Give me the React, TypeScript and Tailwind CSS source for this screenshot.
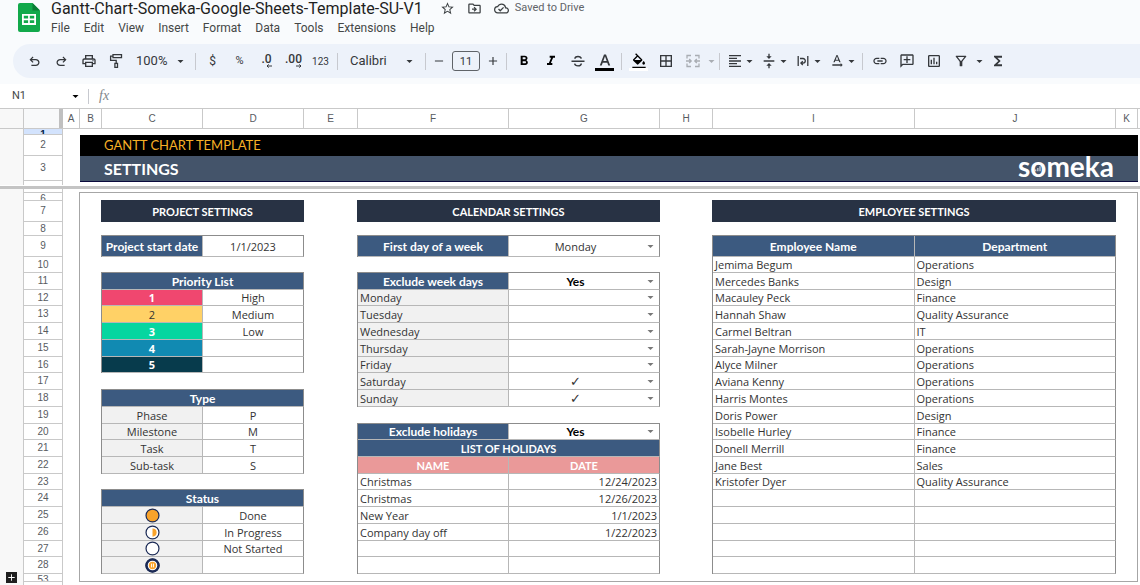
import type { ReactNode } from 'react'
import clsx from 'clsx'
import {
  MdAdd,
  MdBorderAll,
  MdFormatAlignLeft,
  MdFormatBold,
  MdFormatColorFill,
  MdFormatColorText,
  MdFormatItalic,
  MdFunctions,
  MdLink,
  MdOutlineAddComment,
  MdOutlineCloudDone,
  MdOutlineDriveFileMove,
  MdOutlineFilterAlt,
  MdOutlineInsertChart,
  MdOutlinePrint,
  MdRemove,
  MdStarBorder,
  MdStrikethroughS,
  MdTextRotationNone,
  MdVerticalAlignCenter,
} from 'react-icons/md'

const menus = ['File', 'Edit', 'View', 'Insert', 'Format', 'Data', 'Tools', 'Extensions', 'Help']

const columns = ['A', 'B', 'C', 'D', 'E', 'F', 'G', 'H', 'I', 'J', 'K', '']

// A..K plus the sliver of L; the wide columns share the free width
const sheetGrid =
  'grid grid-cols-[17px_22px_101fr_101fr_54fr_151fr_151fr_53fr_202fr_201fr_22px_2px]'

const priorities = [
  { rank: '1', label: 'High', tone: 'bg-[#f0476f] text-white font-bold' },
  { rank: '2', label: 'Medium', tone: 'bg-[#ffd166] text-[#333333]' },
  { rank: '3', label: 'Low', tone: 'bg-[#06d6a0] text-white font-bold' },
  { rank: '4', label: '', tone: 'bg-[#118ab2] text-white font-bold' },
  { rank: '5', label: '', tone: 'bg-[#073b4c] text-white font-bold' },
]

const types = [
  ['Phase', 'P'],
  ['Milestone', 'M'],
  ['Task', 'T'],
  ['Sub-task', 'S'],
]

const statuses = ['Done', 'In Progress', 'Not Started', '']

const weekDays = [
  { day: 'Monday', off: '' },
  { day: 'Tuesday', off: '' },
  { day: 'Wednesday', off: '' },
  { day: 'Thursday', off: '' },
  { day: 'Friday', off: '' },
  { day: 'Saturday', off: '✓' },
  { day: 'Sunday', off: '✓' },
]

const holidays = [
  ['Christmas', '12/24/2023'],
  ['Christmas', '12/26/2023'],
  ['New Year', '1/1/2023'],
  ['Company day off', '1/22/2023'],
  ['', ''],
  ['', ''],
]

const employees = [
  ['Jemima Begum', 'Operations'],
  ['Mercedes Banks', 'Design'],
  ['Macauley Peck', 'Finance'],
  ['Hannah Shaw', 'Quality Assurance'],
  ['Carmel Beltran', 'IT'],
  ['Sarah-Jayne Morrison', 'Operations'],
  ['Alyce Milner', 'Operations'],
  ['Aviana Kenny', 'Operations'],
  ['Harris Montes', 'Operations'],
  ['Doris Power', 'Design'],
  ['Isobelle Hurley', 'Finance'],
  ['Donell Merrill', 'Finance'],
  ['Jane Best', 'Sales'],
  ['Kristofer Dyer', 'Quality Assurance'],
  ['', ''],
  ['', ''],
  ['', ''],
  ['', ''],
  ['', ''],
]

const scrollRows = [5, 6, 7, 8, 9, 10, 11, 12, 13, 14, 15, 16, 17, 18, 19, 20, 21, 22, 23, 24, 25, 26, 27, 28, 53]

const shortRows = [10, 12, 16, 20, 23, 27]

function rowHeight(row: number) {
  if (row === 5) return 'h-1'
  if (row === 6 || row === 53) return 'h-2'
  if (row === 8) return 'h-[14px]'
  if (row === 7 || row === 9) return 'h-[21px]'
  return shortRows.includes(row) ? 'h-4' : 'h-[17px]'
}

/* ---------- toolbar ---------- */

function Caret({ className }: { className?: string }) {
  return (
    <svg viewBox="0 0 8 4" className={clsx('h-[3px] w-[7px] shrink-0', className)} aria-hidden>
      <path d="M0 0h8L4 4z" fill="currentColor" />
    </svg>
  )
}

function ToolButton({ label, muted, children }: { label: string; muted?: boolean; children: ReactNode }) {
  return (
    <button
      type="button"
      aria-label={label}
      className={clsx('flex h-6 w-[27px] shrink-0 items-center justify-center', muted && 'text-[#a9adb3]')}
    >
      {children}
    </button>
  )
}

function MenuButton({ label, children }: { label: string; children: ReactNode }) {
  return (
    <button type="button" aria-label={label} className="flex h-6 w-[34px] shrink-0 items-center justify-center gap-[3px]">
      {children}
      <Caret />
    </button>
  )
}

function CaretButton({ label, muted }: { label: string; muted?: boolean }) {
  return (
    <button
      type="button"
      aria-label={label}
      className={clsx('flex h-6 w-[10px] shrink-0 items-center justify-center', muted && 'text-[#a9adb3]')}
    >
      <Caret />
    </button>
  )
}

function Divider() {
  return <span className="mx-[3px] h-[17px] w-px shrink-0 bg-[#c7c9cf]" />
}

const undoPath =
  'M280-200v-80h284q63 0 109.5-40T720-420q0-60-46.5-100T564-560H312l104 104-56 56-200-200 200-200 56 56-104 104h252q97 0 166.5 63T800-420q0 94-69.5 157T564-200H280Z'

function UndoIcon({ className }: { className?: string }) {
  return (
    <svg viewBox="0 -960 960 960" className={clsx('size-[15px]', className)} fill="currentColor" aria-hidden>
      <path d={undoPath} />
    </svg>
  )
}

function PaintRollerIcon() {
  return (
    <svg viewBox="0 0 16 16" className="size-4" fill="none" stroke="currentColor" strokeWidth="1.3" aria-hidden>
      <path d="M5 1.7h8.5v3H5zM5 3.2H2.6v4.1h5.6v3M6.9 10.3h2.6v4H6.9z" />
    </svg>
  )
}

function DecimalIcon({ digits, increase }: { digits: string; increase?: boolean }) {
  return (
    <span className="flex flex-col items-end leading-none">
      <span className="text-[12px] leading-[10px] font-medium">{digits}</span>
      <svg viewBox="0 0 6 4" className={clsx('h-1 w-[6px]', increase && '-scale-x-100')} aria-hidden>
        <path d="M6 2H1M2.7.4 1 2l1.7 1.6" fill="none" stroke="currentColor" />
      </svg>
    </span>
  )
}

function StrikeIcon() {
  return (
    <svg viewBox="0 0 16 16" className="size-4" fill="none" stroke="currentColor" strokeWidth="1.4" aria-hidden>
      <path d="M1.5 8.2h13M11.3 5.6C11 4.2 9.800 3.500 8 3.500S4.900 4.200 4.900 5.800M4.600 10.700c.3 1.400 1.500 2.200 3.400 2.200s3.300-.8 3.300-2.400" />
    </svg>
  )
}

function MergeIcon() {
  return (
    <svg viewBox="0 0 16 14" className="h-[14px] w-4" fill="none" stroke="currentColor" strokeWidth="1.3" aria-hidden>
      <path d="M6 1.5H2v3M10 1.5h4v3M6 12.5H2v-3M10 12.5h4v-3M1 7h5M4.2 5 6.2 7l-2 2M15 7h-5M11.8 5l-2 2 2 2" />
    </svg>
  )
}

function WrapIcon() {
  return (
    <svg viewBox="0 0 16 16" className="size-4 shrink-0" fill="none" stroke="currentColor" strokeWidth="1.3" aria-hidden>
      <path d="M3.200 3v10M12.800 3v10M5 5.500h3a2.300 2.300 0 0 1 0 4.600H6M7.800 8.200 5.900 10.100l1.900 1.900" />
    </svg>
  )
}

function Toolbar() {
  return (
    <div
      role="toolbar"
      aria-label="Main"
      className="ml-[13px] flex h-[34px] items-center overflow-hidden rounded-l-full bg-[#edf2fa] pl-2 text-[#35383c]"
    >
      <ToolButton label="Undo"><UndoIcon /></ToolButton>
      <ToolButton label="Redo"><UndoIcon className="-scale-x-100" /></ToolButton>
      <ToolButton label="Print"><MdOutlinePrint size={16} /></ToolButton>
      <ToolButton label="Paint format"><PaintRollerIcon /></ToolButton>
      <button type="button" className="flex h-6 w-[63px] shrink-0 items-center justify-between pr-2 pl-[7px] text-[13px]">
        100%
        <Caret />
      </button>
      <Divider />
      <ToolButton label="Format as currency"><span className="text-[12px]">$</span></ToolButton>
      <ToolButton label="Format as percent"><span className="text-[11px]">%</span></ToolButton>
      <ToolButton label="Decrease decimal places"><DecimalIcon digits=".0" /></ToolButton>
      <ToolButton label="Increase decimal places"><DecimalIcon digits=".00" increase /></ToolButton>
      <ToolButton label="More formats"><span className="text-[10px]">123</span></ToolButton>
      <Divider />
      <button type="button" className="flex h-6 w-[81px] shrink-0 items-center justify-between px-[9px] text-[13px]">
        Calibri
        <Caret />
      </button>
      <Divider />
      <div className="flex shrink-0 items-center gap-[3px]">
        <button type="button" aria-label="Decrease font size" className="flex w-5 justify-center">
          <MdRemove size={14} />
        </button>
        <input
          aria-label="Font size"
          defaultValue="11"
          className="h-5 w-7 rounded-[3px] border border-[#5f6368] text-center text-[11px]"
        />
        <button type="button" aria-label="Increase font size" className="flex w-5 justify-center">
          <MdAdd size={14} />
        </button>
      </div>
      <Divider />
      <ToolButton label="Bold"><MdFormatBold size={16} className="text-black" /></ToolButton>
      <ToolButton label="Italic"><MdFormatItalic size={16} className="text-black" /></ToolButton>
      <ToolButton label="Strikethrough"><StrikeIcon /></ToolButton>
      <ToolButton label="Text color">
        <span className="flex flex-col items-center">
          <MdFormatColorText size={16} viewBox="2 0 20 20" />
          <span className="h-[3px] w-[19px] bg-black" />
        </span>
      </ToolButton>
      <Divider />
      <ToolButton label="Fill color">
        <span className="flex flex-col items-center">
          <MdFormatColorFill size={16} className="text-black" viewBox="0 0 24 20" />
          <span className="h-[3px] w-[19px] bg-white" />
        </span>
      </ToolButton>
      <ToolButton label="Borders"><MdBorderAll size={16} /></ToolButton>
      <ToolButton label="Merge cells" muted><MergeIcon /></ToolButton>
      <CaretButton label="Merge type" muted />
      <Divider />
      <MenuButton label="Horizontal align"><MdFormatAlignLeft size={16} /></MenuButton>
      <MenuButton label="Vertical align"><MdVerticalAlignCenter size={16} /></MenuButton>
      <MenuButton label="Text wrapping"><WrapIcon /></MenuButton>
      <MenuButton label="Text rotation"><MdTextRotationNone size={16} /></MenuButton>
      <Divider />
      <ToolButton label="Insert link"><MdLink size={16} /></ToolButton>
      <ToolButton label="Insert comment"><MdOutlineAddComment size={16} className="-scale-x-100" /></ToolButton>
      <ToolButton label="Insert chart"><MdOutlineInsertChart size={16} /></ToolButton>
      <ToolButton label="Create a filter"><MdOutlineFilterAlt size={16} /></ToolButton>
      <CaretButton label="Filter views" />
      <ToolButton label="Functions"><MdFunctions size={16} /></ToolButton>
    </div>
  )
}

/* ---------- document header ---------- */

function SheetsLogo() {
  return (
    <svg viewBox="0 0 22 29" className="mt-[3px] h-[29px] w-[22px] shrink-0" aria-hidden>
      <path d="M2 0h12.5L22 7.5V27a2 2 0 0 1-2 2H2a2 2 0 0 1-2-2V2a2 2 0 0 1 2-2z" fill="#12a94b" />
      <path d="M14.5 0 22 7.5h-7.5z" fill="#0b7d36" />
      <path d="M4 11h14v11H4zm1.8 1.8v2.8h4.3v-2.8zm6 0v2.8h4.4v-2.8zm-6 4.5v2.8h4.3v-2.8zm6 0v2.8h4.4v-2.8z" fill="#fff" fillRule="evenodd" />
    </svg>
  )
}

function DocHeader() {
  return (
    <header className="flex pb-[6px] pl-[18px]">
      <SheetsLogo />
      <div className="ml-[11px] flex min-w-0 flex-col whitespace-nowrap">
        <div className="flex h-[18px] items-center pb-px text-[#3c4043]">
          <h1 className="mr-[17px] text-[16px] leading-4 text-[#1f1f1f]">
            Gantt-Chart-Someka-Google-Sheets-Template-SU-V1
          </h1>
          <button type="button" aria-label="Star" className="mr-3"><MdStarBorder size={15} /></button>
          <button type="button" aria-label="Move" className="mr-3"><MdOutlineDriveFileMove size={15} /></button>
          <MdOutlineCloudDone size={15} aria-hidden />
          <span className="ml-[6px] text-[11px] text-[#5f6368]">Saved to Drive</span>
        </div>
        <nav className="flex h-5 items-center gap-[14px] text-[12px] text-[#444746]">
          {menus.map((menu) => (
            <button key={menu} type="button">{menu}</button>
          ))}
        </nav>
      </div>
    </header>
  )
}

function FormulaBar() {
  return (
    <div className="mt-[6px] flex h-6 items-center bg-white text-[#444746]">
      <button type="button" className="flex w-[88px] items-center justify-between pr-[9px] pl-3 text-[11px]">
        N1
        <Caret className="text-black" />
      </button>
      <span className="h-[15px] w-px bg-[#c7c9cf]" />
      <span className="ml-[10px] font-['Liberation_Serif',serif] text-[14px] leading-4 text-[#80868b] italic">fx</span>
      <input aria-label="Formula" className="h-5 min-w-0 flex-1 bg-transparent px-2 outline-none" />
    </div>
  )
}

/* ---------- sheet ---------- */

function Gutter({ children }: { children?: ReactNode }) {
  return (
    <div className="flex w-6 shrink-0 flex-col items-center border-r border-[#c9c9c9] bg-[#f8f8f8]">{children}</div>
  )
}

function RowNumber({ height, active, top, children }: { height: string; active?: boolean; top?: boolean; children?: ReactNode }) {
  return (
    <div
      className={clsx(
        'flex justify-center overflow-hidden border-b border-[#c9c9c9]',
        height,
        top ? 'items-start' : 'items-center',
        active ? 'bg-[#d3e3fd] font-bold text-[#041e49]' : 'text-[#575b5f]',
      )}
    >
      {children}
    </div>
  )
}

function ColumnHeader() {
  return (
    <div className="flex h-[21px] border-y border-[#c9c9c9] text-[10px] text-[#575b5f]">
      <div className="w-6 shrink-0 border-r border-[#c9c9c9] bg-[#f8f8f8]" />
      <div className="w-[39px] shrink-0 border-r-4 border-[#c0c0c0] bg-[#f8f9fa]" />
      <div className={clsx(sheetGrid, 'flex-1')}>
        {columns.map((column, i) => (
          <span key={i} className="flex items-center justify-center border-r border-[#c9c9c9] last:border-r-0">
            {column}
          </span>
        ))}
      </div>
    </div>
  )
}

function SomekaLogo() {
  return (
    <span className="relative self-start text-[28px] leading-5 font-bold text-white" aria-label="someka">
      someka
      <svg viewBox="0 0 8 8" className="absolute top-[9px] left-[17px] size-[7px]" aria-hidden>
        <path d="M0 7V5h1.5v2zM2.500 7V3.500H4V7zM5 7V1.500h1.500V7z" fill="#c9d0da" />
      </svg>
    </span>
  )
}

function FrozenRows() {
  return (
    <div className="flex h-14">
      <Gutter />
      <div className="w-[39px] shrink-0 border-r border-[#c9c9c9] text-[10px] leading-3">
        <RowNumber height="h-[6px]" active top>1</RowNumber>
        <RowNumber height="h-[21px]">2</RowNumber>
        <RowNumber height="h-[25px]">3</RowNumber>
      </div>
      <div className={clsx(sheetGrid, 'flex-1 pt-[6px] pb-[3px]')}>
        <div className="col-start-2 col-end-12 flex flex-col border-b border-[#0a0a3c] font-['Lato',sans-serif]">
          <div className="flex h-[21px] items-center bg-black pl-6 text-[13px] text-[#f6b026]">GANTT CHART TEMPLATE</div>
          <div className="flex h-[25px] items-center justify-between bg-[#44546a] pr-6 pl-6">
            <h2 className="text-[16px] font-bold text-white">SETTINGS</h2>
            <SomekaLogo />
          </div>
        </div>
      </div>
    </div>
  )
}

type CellProps = { as?: 'td' | 'th'; className?: string; span?: number; children?: ReactNode }

function Cell({ as: Tag = 'td', className, span, children }: CellProps) {
  return (
    <Tag
      colSpan={span}
      className={clsx('overflow-hidden border-r border-b border-[#b7b7b7] p-0 whitespace-nowrap last:border-r-[#8c8c8c]', className)}
    >
      {children}
    </Tag>
  )
}

const headCell = "bg-[#3c5a80] font-['Lato',sans-serif] text-[12px] font-bold text-white"
const holidayHeadCell = "bg-[#ea9999] font-['Lato',sans-serif] font-bold text-white"

function Block({ label, children }: { label: string; children: ReactNode }) {
  return (
    <table
      aria-label={label}
      className="-mt-px w-full table-fixed border-separate border-spacing-0 border-t border-l border-[#8c8c8c] text-center"
    >
      <tbody>{children}</tbody>
    </table>
  )
}

function Row({ n, children }: { n: number; children: ReactNode }) {
  return <tr className={rowHeight(n)}>{children}</tr>
}

function Gap({ row }: { row: number }) {
  return <div className={clsx('shrink-0', rowHeight(row))} />
}

function PanelTitle({ children }: { children: ReactNode }) {
  return (
    <h3 className="-mt-px flex h-[22px] shrink-0 items-center justify-center bg-[#283244] font-['Lato',sans-serif] font-bold text-white">
      {children}
    </h3>
  )
}

function CellSelect({ label, value, options, bold }: { label: string; value: string; options: string[]; bold?: boolean }) {
  return (
    <span className="grid items-center">
      <select
        aria-label={label}
        defaultValue={value}
        className={clsx(
          'col-start-1 row-start-1 h-[15px] w-full appearance-none bg-transparent pr-[17px] text-center leading-[15px]',
          bold && "font-['Lato',sans-serif] text-[12px] font-bold text-black",
          value === '✓' && 'text-[13px]',
        )}
      >
        {options.map((option) => (
          <option key={option}>{option}</option>
        ))}
      </select>
      <Caret className="pointer-events-none col-start-1 row-start-1 mr-[5px] justify-self-end text-[#777777]" />
    </span>
  )
}

function StatusIcon({ index }: { index: number }) {
  return (
    <svg viewBox="0 0 16 16" className="mx-auto size-[15px]" aria-hidden>
      <circle cx="8" cy="8" r="6.9" fill={index === 0 ? '#f9a32b' : '#fff'} stroke="#1b2a55" strokeWidth="1.3" />
      {index === 1 && <path d="M8 3.6a4.4 4.4 0 0 1 0 8.8z" fill="#f9a32b" />}
      {index === 3 && (
        <>
          <circle cx="8" cy="8" r="6.4" fill="#fff" stroke="#1b2a55" strokeWidth="2.6" />
          <circle cx="8" cy="8" r="3.9" fill="#f9a32b" />
          <path d="M7 6v4M9 6v4" stroke="#fff" strokeWidth="1" />
        </>
      )}
    </svg>
  )
}

function ProjectPanel() {
  return (
    <section className="col-start-2 col-end-4 -ml-px flex flex-col">
      <PanelTitle>PROJECT SETTINGS</PanelTitle>
      <Gap row={8} />
      <Block label="Project start date">
        <Row n={9}>
          <Cell as="th" className={headCell}>Project start date</Cell>
          <Cell>1/1/2023</Cell>
        </Row>
      </Block>
      <Gap row={10} />
      <Block label="Priority list">
        <Row n={11}>
          <Cell as="th" span={2} className={headCell}>Priority List</Cell>
        </Row>
        {priorities.map((item, i) => (
          <Row key={item.rank} n={12 + i}>
            <Cell className={item.tone}>{item.rank}</Cell>
            <Cell>{item.label}</Cell>
          </Row>
        ))}
      </Block>
      <Gap row={17} />
      <Block label="Type">
        <Row n={18}>
          <Cell as="th" span={2} className={headCell}>Type</Cell>
        </Row>
        {types.map(([name, code], i) => (
          <Row key={name} n={19 + i}>
            <Cell className="bg-[#f1f1f1]">{name}</Cell>
            <Cell>{code}</Cell>
          </Row>
        ))}
      </Block>
      <Gap row={23} />
      <Block label="Status">
        <Row n={24}>
          <Cell as="th" span={2} className={headCell}>Status</Cell>
        </Row>
        {statuses.map((status, i) => (
          <Row key={i} n={25 + i}>
            <Cell className="bg-[#f1f1f1]"><StatusIcon index={i} /></Cell>
            <Cell>{status}</Cell>
          </Row>
        ))}
      </Block>
    </section>
  )
}

function CalendarPanel() {
  return (
    <section className="col-start-5 col-end-7 -ml-px flex flex-col">
      <PanelTitle>CALENDAR SETTINGS</PanelTitle>
      <Gap row={8} />
      <Block label="First day of a week">
        <Row n={9}>
          <Cell as="th" className={headCell}>First day of a week</Cell>
          <Cell>
            <CellSelect label="First day of a week" value="Monday" options={weekDays.map((d) => d.day)} />
          </Cell>
        </Row>
      </Block>
      <Gap row={10} />
      <Block label="Exclude week days">
        <Row n={11}>
          <Cell as="th" className={headCell}>Exclude week days</Cell>
          <Cell>
            <CellSelect label="Exclude week days" value="Yes" options={['Yes', 'No']} bold />
          </Cell>
        </Row>
        {weekDays.map(({ day, off }, i) => (
          <Row key={day} n={12 + i}>
            <Cell className="bg-[#f1f1f1] pl-[2px] text-left">{day}</Cell>
            <Cell>
              <CellSelect label={`Exclude ${day}`} value={off} options={['', '✓']} />
            </Cell>
          </Row>
        ))}
      </Block>
      <Gap row={19} />
      <Block label="Holidays">
        <Row n={20}>
          <Cell as="th" className={headCell}>Exclude holidays</Cell>
          <Cell>
            <CellSelect label="Exclude holidays" value="Yes" options={['Yes', 'No']} bold />
          </Cell>
        </Row>
        <Row n={21}>
          <Cell as="th" span={2} className="bg-[#3c5a80] font-['Lato',sans-serif] font-bold text-white">LIST OF HOLIDAYS</Cell>
        </Row>
        <Row n={22}>
          <Cell as="th" className={holidayHeadCell}>NAME</Cell>
          <Cell as="th" className={holidayHeadCell}>DATE</Cell>
        </Row>
        {holidays.map(([name, date], i) => (
          <Row key={i} n={23 + i}>
            <Cell className="pl-[2px] text-left">{name}</Cell>
            <Cell className="pr-[2px] text-right">{date}</Cell>
          </Row>
        ))}
      </Block>
    </section>
  )
}

function EmployeePanel() {
  return (
    <section className="col-start-8 col-end-10 -ml-px flex flex-col">
      <PanelTitle>EMPLOYEE SETTINGS</PanelTitle>
      <Gap row={8} />
      <Block label="Employees">
        <Row n={9}>
          <Cell as="th" className={headCell}>Employee Name</Cell>
          <Cell as="th" className={headCell}>Department</Cell>
        </Row>
        {employees.map(([name, department], i) => (
          <Row key={i} n={10 + i}>
            <Cell className="pl-[2px] text-left">{name}</Cell>
            <Cell className="pl-[2px] text-left">{department}</Cell>
          </Row>
        ))}
      </Block>
    </section>
  )
}

function SheetBody() {
  return (
    <div className="flex flex-1">
      <Gutter>
        <button
          type="button"
          aria-label="Expand rows"
          className="mt-auto mb-[2px] flex size-[11px] items-center justify-center bg-[#1f1f1f] text-white"
        >
          <MdAdd size={11} />
        </button>
      </Gutter>
      <div className="w-[39px] shrink-0 border-r border-[#c9c9c9] text-[10px] leading-3">
        {scrollRows.map((row) => (
          <RowNumber key={row} height={rowHeight(row)} top={row === 6 || row === 53}>
            {row > 5 && row}
          </RowNumber>
        ))}
      </div>
      <div className={clsx(sheetGrid, 'flex-1 content-start pt-[3px]')}>
        <div className="col-start-2 col-end-12 -ml-px grid grid-cols-subgrid border border-[#a6a6a6] pt-2 pb-[7px] font-['Open_Sans',sans-serif] text-[11px] leading-[15px] text-[#333333]">
          <ProjectPanel />
          <CalendarPanel />
          <EmployeePanel />
        </div>
      </div>
    </div>
  )
}

export default function App() {
  return (
    <div className="flex min-h-screen flex-col overflow-hidden bg-[#f9fbfd] font-['Roboto',sans-serif]">
      <DocHeader />
      <Toolbar />
      <FormulaBar />
      <main className="flex flex-1 flex-col bg-white font-['Liberation_Sans',sans-serif]">
        <ColumnHeader />
        <FrozenRows />
        <div className="h-1 shrink-0 border-t border-white bg-[#c4c4c4]" />
        <SheetBody />
      </main>
    </div>
  )
}
